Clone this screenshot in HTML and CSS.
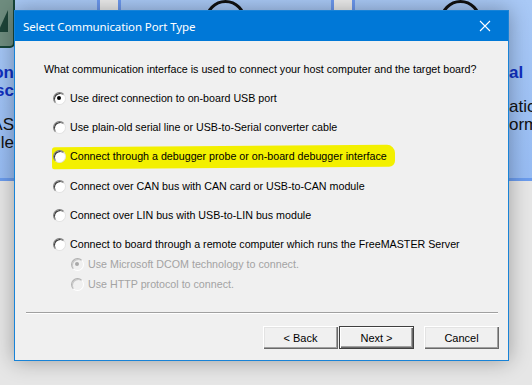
FILE: index.html
```html
<!DOCTYPE html>
<html>
<head>
<meta charset="utf-8">
<link rel="stylesheet" href="styles.css">
</head>
<body>
<div class="desktop">
  <div class="band">
    <div class="card card-left">
      <div class="app-icon"><span class="app-icon-mark"></span></div>
      <div class="card-text card-text-left">
        <div class="hd">on</div>
        <div class="hd">ssc</div>
        <div class="bd bd-first">AS</div>
        <div class="bd">dle</div>
      </div>
    </div>
    <div class="gap"></div>
    <div class="card card-mid"><span class="ring ring-a"></span></div>
    <div class="gap"></div>
    <div class="card card-right">
      <span class="ring ring-b"></span>
      <div class="card-text card-text-right">
        <div class="hd">al</div>
        <div class="bd bd-first">atic</div>
        <div class="bd">orm</div>
      </div>
    </div>
  </div>
</div>

<div class="dialog">
  <div class="titlebar">
    <span class="title">Select Communication Port Type</span>
    <svg class="close" width="12" height="12" viewBox="0 0 12 12"><path d="M1 1L11 11M11 1L1 11" stroke="#fff" stroke-width="1.1" fill="none"/></svg>
  </div>
  <div class="body">
    <div class="question">What communication interface is used to connect your host computer and the target board?</div>
    <div class="options">
      <div class="opt"><span class="radio checked"></span><span>Use direct connection to on-board USB port</span></div>
      <div class="opt"><span class="radio"></span><span>Use plain-old serial line or USB-to-Serial converter cable</span></div>
      <div class="opt marked"><span class="marker"></span><span class="radio"></span><span>Connect through a debugger probe or on-board debugger interface</span></div>
      <div class="opt"><span class="radio"></span><span>Connect over CAN bus with CAN card or USB-to-CAN module</span></div>
      <div class="opt"><span class="radio"></span><span>Connect over LIN bus with USB-to-LIN bus module</span></div>
      <div class="opt"><span class="radio"></span><span>Connect to board through a remote computer which runs the FreeMASTER Server</span></div>
    </div>
    <div class="suboptions">
      <div class="opt disabled"><span class="radio checked"></span><span>Use Microsoft DCOM technology to connect.</span></div>
      <div class="opt disabled"><span class="radio"></span><span>Use HTTP protocol to connect.</span></div>
    </div>
  </div>
  <div class="footer">
    <div class="sep"></div>
    <div class="buttons">
      <button class="btn">&lt; Back</button>
      <button class="btn default">Next &gt;</button>
      <button class="btn cancel">Cancel</button>
    </div>
  </div>
</div>
</body>
</html>
```
FILE: styles.css
```css
* { box-sizing: border-box; }
html, body { margin: 0; padding: 0; }
body {
  width: 532px;
  height: 385px;
  overflow: hidden;
  background: #e6e6e6;
  position: relative;
  font-family: "Liberation Sans", Arial, sans-serif;
}

/* desktop behind the dialog */
.desktop { position: absolute; inset: 0; }
.band {
  display: flex;
  height: 181px;
}
.card {
  position: relative;
  height: 181px;
  background: linear-gradient(180deg, #a9c9f6 0%, #97bcf3 100%);
  border-bottom: 3px solid #6b9ced;
  overflow: hidden;
}
.card-left { width: 97px; }
.card-mid { width: 210px; }
.card-right { flex: 1; }
.gap {
  width: 24px;
  background: #ececec;
  border-left: 3px solid #6c98ee;
  border-right: 3px solid #6c98ee;
}
.app-icon {
  position: absolute;
  left: -10px;
  top: -6px;
  width: 25px;
  height: 54px;
  background: #6f8d7f;
  border: 2px solid #17463a;
  border-radius: 0 0 5px 0;
  overflow: hidden;
}
.app-icon-mark {
  position: absolute;
  left: 6px;
  top: 14px;
  width: 0;
  height: 0;
  border-left: 10px solid transparent;
  border-bottom: 22px solid #1d4438;
}
.ring {
  position: absolute;
  width: 41px;
  height: 41px;
  border: 3px solid #111;
  border-radius: 50%;
  top: 0;
}
.ring-a { left: 84px; }
.ring-b { left: 85px; }
.card-text {
  position: absolute;
  top: 64px;
  font-size: 17px;
  line-height: 18px;
  white-space: nowrap;
}
.card-text-left { right: 83px; text-align: right; }
.card-text-right { left: 154px; }
.hd { color: #1030c0; font-weight: bold; }
.bd { color: #111; }
.bd-first { margin-top: 16px; }

/* dialog */
.dialog {
  position: absolute;
  left: 14px;
  top: 10px;
  width: 495px;
  height: 351px;
  border: 1px solid #1883d7;
  background: #f0f0f0;
  display: flex;
  flex-direction: column;
  box-shadow: 0 0 20px rgba(0, 0, 0, 0.32);
}
.titlebar {
  height: 30px;
  background: #0078d7;
  color: #fff;
  display: flex;
  align-items: center;
  justify-content: space-between;
  padding: 0 17px 0 8px;
  flex: none;
}
.title {
  font-family: "Noto Sans", "Open Sans", sans-serif;
  font-size: 11.5px;
  letter-spacing: -0.1px;
}
.close { display: block; }

.body {
  padding: 22px 0 0 29px;
  font-size: 10.7px;
  line-height: 13px;
  color: #000;
}
.question { white-space: nowrap; }
.options {
  margin-top: 16px;
  margin-left: 9px;
  display: flex;
  flex-direction: column;
  gap: 16.2px;
}
.suboptions {
  margin-top: 7px;
  margin-left: 27px;
  display: flex;
  flex-direction: column;
  gap: 7px;
}
.opt {
  position: relative;
  display: flex;
  align-items: center;
  gap: 4px;
  white-space: nowrap;
  height: 13px;
}
.opt > span:last-child { position: relative; }
.marker {
  position: absolute;
  left: -1px;
  top: -4px;
  width: 343px;
  height: 22px;
  background: #f3f000;
  border-radius: 3px 8px 6px 2px;
  transform: rotate(-0.4deg);
}
.radio {
  position: relative;
  flex: none;
  width: 13px;
  height: 13px;
  border-radius: 50%;
  background: #fff;
  border: 1px solid;
  border-color: #7c7c7c #e3e3e3 #e3e3e3 #7c7c7c;
  box-shadow: inset 1px 1px 0 #3c3c3c;
}
.radio.checked::after {
  content: "";
  position: absolute;
  left: 3px;
  top: 3px;
  width: 4px;
  height: 4px;
  border-radius: 50%;
  background: #000;
}
.disabled { color: #a3a3a3; }
.disabled .radio {
  background: #f0f0f0;
  border-color: #b0b0b0 #ffffff #ffffff #b0b0b0;
  box-shadow: inset 1px 1px 0 #c8c8c8;
}
.disabled .radio.checked::after { background: #a8a8a8; }

.footer {
  margin-top: auto;
  padding: 0 9px 11px 11px;
}
.sep {
  height: 2px;
  border-top: 1px solid #a0a0a0;
  border-bottom: 1px solid #ffffff;
  margin-right: 1px;
}
.buttons {
  margin-top: 12px;
  display: flex;
  justify-content: flex-end;
}
.btn {
  width: 75px;
  height: 23px;
  padding: 0;
  font-family: "Liberation Sans", Arial, sans-serif;
  font-size: 11px;
  color: #000;
  background: #f0f0f0;
  border: none;
  border-radius: 0;
  box-shadow: inset 1px 1px 0 #ffffff, inset -1px -1px 0 #696969, inset -2px -2px 0 #a0a0a0, inset 2px 2px 0 #e3e3e3;
}
.btn.default {
  margin-left: 1px;
  box-shadow: inset 0 0 0 1px #404040, inset 2px 2px 0 #ffffff, inset -2px -2px 0 #696969, inset -3px -3px 0 #a0a0a0;
}
.btn.cancel { margin-left: 10px; }
```
